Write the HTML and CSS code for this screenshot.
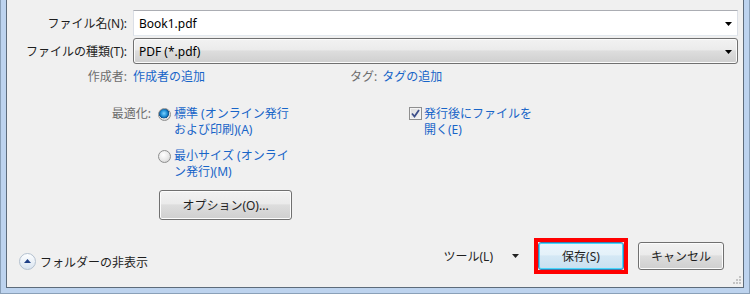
FILE: index.html
```html
<!DOCTYPE html>
<html lang="ja">
<head>
    <meta charset="UTF-8">
    <title>名前を付けて保存</title>
    <link rel="stylesheet" href="styles.css">
</head>
<body>
    <div class="frame">
        <div class="pane">
            <div class="field-row name-row">
                <label class="field-label">ファイル名(N):</label>
                <div class="combo edit">
                    <span class="combo-text">Book1.pdf</span>
                    <svg class="arrow" width="7" height="4" viewBox="0 0 7 4"><path d="M0 0H7L3.5 4Z" fill="#000"/></svg>
                </div>
            </div>
            <div class="field-row type-row">
                <label class="field-label">ファイルの種類(T):</label>
                <div class="combo select">
                    <span class="combo-text">PDF (*.pdf)</span>
                    <svg class="arrow" width="7" height="4" viewBox="0 0 7 4"><path d="M0 0H7L3.5 4Z" fill="#000"/></svg>
                </div>
            </div>

            <div class="meta-row">
                <div class="meta author">
                    <span class="meta-label">作成者:</span>
                    <a class="link">作成者の追加</a>
                </div>
                <div class="meta tags">
                    <span class="meta-label">タグ:</span>
                    <a class="link">タグの追加</a>
                </div>
            </div>

            <div class="options">
                <div class="opt-label">最適化:</div>
                <div class="opt-radios">
                    <div class="radio-item">
                        <span class="radio checked"></span>
                        <span class="opt-text">標準 (オンライン発行<br>および印刷)(A)</span>
                    </div>
                    <div class="radio-item second">
                        <span class="radio"></span>
                        <span class="opt-text">最小サイズ (オンライ<br>ン発行)(M)</span>
                    </div>
                    <button class="btn options-btn">オプション(O)...</button>
                </div>
                <div class="opt-check">
                    <span class="check">
                        <svg width="9" height="9" viewBox="0 0 9 9"><path d="M1 4.5L3.5 7.5L8 1" fill="none" stroke="#3d4f8a" stroke-width="1.8"/></svg>
                    </span>
                    <span class="opt-text">発行後にファイルを<br>開く(E)</span>
                </div>
            </div>

            <div class="footer">
                <div class="hide-folders">
                    <span class="fold-icon">
                        <svg width="17" height="17" viewBox="0 0 17 17"><path d="M5 10H12L8.5 6Z" fill="#1f3f86"/></svg>
                    </span>
                    <span>フォルダーの非表示</span>
                </div>
                <div class="actions">
                    <span class="tools">ツール(L)</span>
                    <svg class="tools-arrow" width="7" height="4" viewBox="0 0 7 4"><path d="M0 0H7L3.5 4Z" fill="#222"/></svg>
                    <span class="highlight">
                        <button class="btn save">保存(S)</button>
                    </span>
                    <button class="btn cancel">キャンセル</button>
                </div>
            </div>

            <div class="grip">
                <svg width="9" height="9" viewBox="0 0 9 9">
                    <rect x="6" y="0" width="2" height="2" fill="#c4c4c4"/>
                    <rect x="3" y="3" width="2" height="2" fill="#c4c4c4"/>
                    <rect x="6" y="3" width="2" height="2" fill="#c4c4c4"/>
                    <rect x="0" y="6" width="2" height="2" fill="#c4c4c4"/>
                    <rect x="3" y="6" width="2" height="2" fill="#c4c4c4"/>
                    <rect x="6" y="6" width="2" height="2" fill="#c4c4c4"/>
                </svg>
            </div>
        </div>
    </div>
</body>
</html>
```
FILE: styles.css
```css
* {
    box-sizing: border-box;
}

body {
    margin: 0;
    width: 750px;
    height: 294px;
    overflow: hidden;
    font-family: "Noto Sans", "Noto Sans CJK JP", sans-serif;
    font-size: 12px;
    font-kerning: none;
    color: #1e1e1e;
}

/* window frame */
.frame {
    width: 750px;
    height: 294px;
    border: 1px solid #8aa0b8;
    border-top: none;
    background-color: #bdd3ee;
    padding: 0 5px 5px 5px;
}

.pane {
    position: relative;
    height: 288px;
    border: 1px solid #5d6b7a;
    border-top: none;
    background-color: #f0f0f0;
}

/* file name / type rows */
.field-row {
    display: flex;
    align-items: center;
    margin-right: 5px;
}

.name-row {
    padding-top: 10px;
}

.type-row {
    margin-top: 2px;
}

.field-label {
    width: 120px;
    margin-right: 6px;
    text-align: right;
    white-space: nowrap;
}

.combo {
    flex: 1;
    height: 26px;
    display: flex;
    align-items: center;
    padding: 0 5px 0 5px;
}

.combo-text {
    flex: 1;
    color: #000;
}

.combo.edit {
    background-color: #fff;
    border: 1px solid #dbdfe6;
    border-top-color: #abadb3;
    border-bottom-color: #e3e9ef;
}

.combo.select {
    border: 1px solid #707070;
    border-radius: 3px;
    background: linear-gradient(#f2f2f2 0%, #ebebeb 45%, #dddddd 50%, #cfcfcf 100%);
    box-shadow: inset 0 0 0 1px #fbfbfb;
}

.arrow {
    margin-top: 2px;
}

/* author / tags */
.meta-row {
    display: flex;
    margin-top: 5px;
    line-height: 16px;
}

.meta {
    display: flex;
}

.author {
    width: 343px;
}

.author .meta-label {
    width: 120px;
    margin-right: 6px;
    text-align: right;
}

.tags .meta-label {
    margin-right: 5px;
}

.meta-label,
.opt-label {
    color: #6d6d6d;
}

.link,
.opt-text {
    color: #1865c8;
}

/* optimize options */
.options {
    display: flex;
    margin-top: 21px;
    line-height: 16px;
}

.opt-label {
    width: 144px;
    margin-right: 7px;
    text-align: right;
}

.opt-radios {
    width: 251px;
}

.radio-item {
    display: flex;
    align-items: flex-start;
}

.radio-item.second {
    margin-top: 10px;
}

.radio {
    width: 13px;
    height: 13px;
    margin: 2px 3px 0 0;
    border-radius: 50%;
    border: 1px solid #8e8f8f;
    background: radial-gradient(circle at 40% 35%, #ffffff 0%, #e8e8e8 55%, #c9c9c9 100%);
}

.radio.checked {
    background:
        radial-gradient(circle at 45% 40%, #7fd2ff 0%, #1f8fd6 35%, #0f4f8c 55%, transparent 58%),
        radial-gradient(circle at 40% 35%, #ffffff 0%, #e3e3e3 60%, #c4c4c4 100%);
}

.opt-check {
    display: flex;
    align-items: flex-start;
}

.check {
    width: 13px;
    height: 13px;
    margin: 1px 2px 0 0;
    border: 1px solid #8f8f8f;
    background: linear-gradient(135deg, #dcdcdc, #f6f6f6);
    box-shadow: inset 0 0 0 1px #f4f4f4;
    display: flex;
    align-items: center;
    justify-content: center;
}

/* buttons */
.btn {
    font-family: inherit;
    font-size: 12px;
    font-kerning: none;
    color: #1e1e1e;
    padding: 0;
    border: 1px solid #707070;
    border-radius: 3px;
    background: linear-gradient(#f2f2f2 0%, #ebebeb 45%, #dddddd 50%, #cfcfcf 100%);
    box-shadow: inset 0 0 0 1px #fcfcfc;
}

.options-btn {
    display: block;
    width: 133px;
    height: 30px;
    margin: 10px 0 0 1px;
}

/* footer */
.footer {
    display: flex;
    align-items: center;
    justify-content: space-between;
    margin-top: 22px;
    height: 28px;
}

.hide-folders {
    display: flex;
    align-items: center;
    padding-left: 12px;
    margin-top: 11px;
}

.fold-icon {
    width: 17px;
    height: 17px;
    margin-right: 4px;
    border-radius: 50%;
    border: 1px solid #b3c0cf;
    background: linear-gradient(#fdfeff, #d9e4f0);
    display: flex;
}

.fold-icon svg {
    margin: -1px;
}

.actions {
    display: flex;
    align-items: center;
    margin-right: 19px;
}

.tools {
    margin-right: 19px;
}

.tools-arrow {
    margin-right: 15px;
}

/* red box drawn round the default button */
.highlight {
    display: flex;
    border: 4px solid #ff0000;
    margin-right: 10px;
}

.save,
.cancel {
    width: 86px;
    height: 28px;
}

.save {
    border-color: #3c7fb1;
    box-shadow: inset 0 0 0 1px #48d8fd;
    background: linear-gradient(#eaf6fd 0%, #e4f1f9 45%, #d4e8f5 50%, #c9e0f0 100%);
}

.grip {
    position: absolute;
    right: 1px;
    bottom: 2px;
    display: flex;
}
```
